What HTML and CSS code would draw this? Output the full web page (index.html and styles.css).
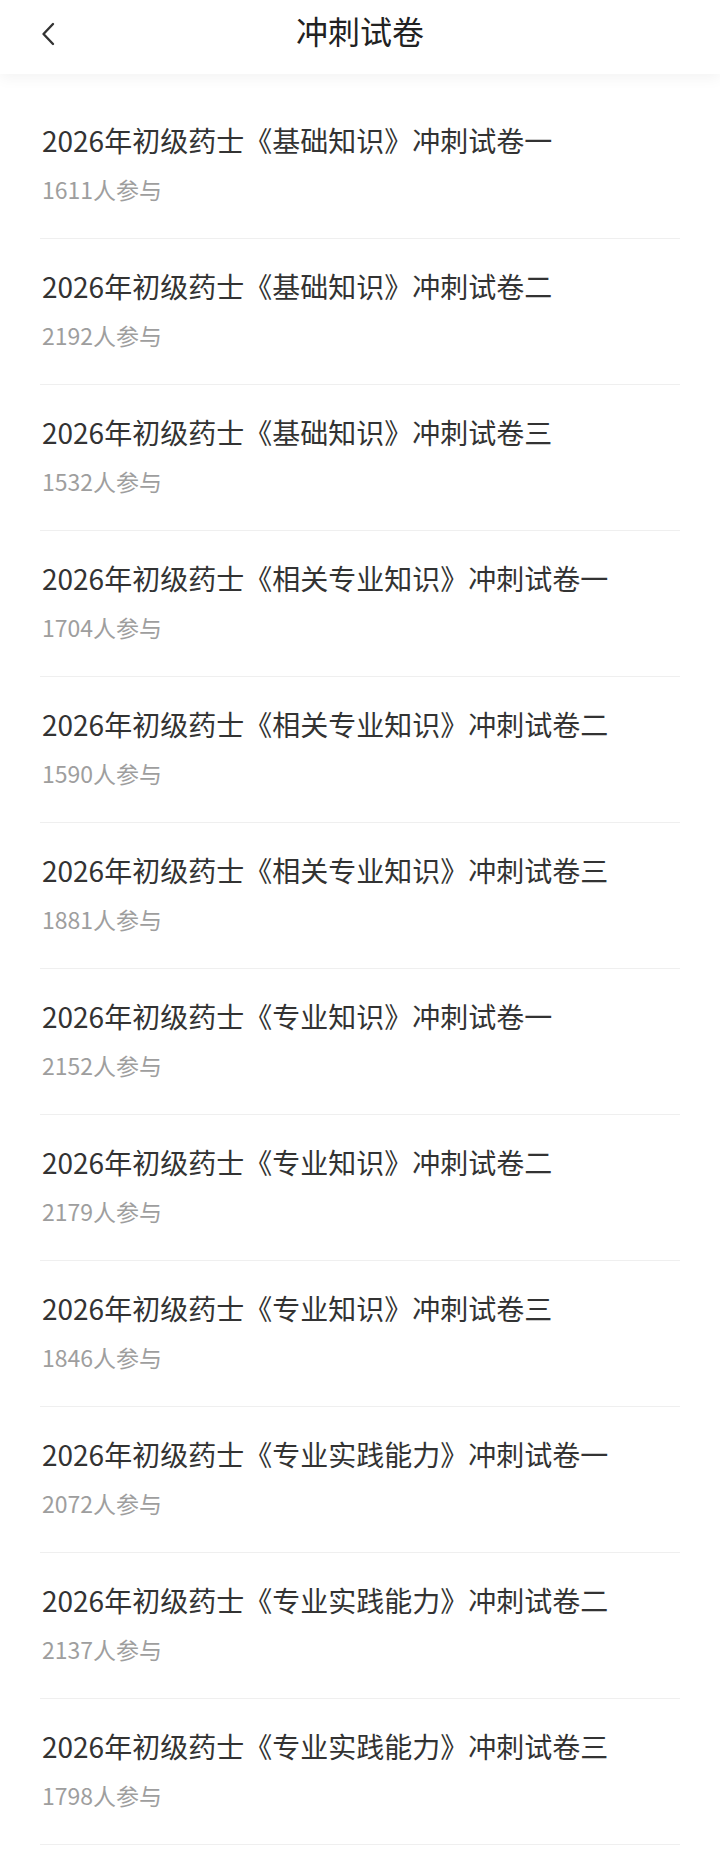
FILE: index.html
```html
<!DOCTYPE html>
<html lang="zh-CN">
<head>
  <meta charset="UTF-8">
  <meta name="viewport" content="width=device-width, initial-scale=1.0">
  <title>冲刺试卷</title>
  <link rel="stylesheet" href="styles.css">
</head>
<body>
  <header class="topbar">
    <a class="back" href="#" aria-label="返回">
      <svg width="14" height="24" viewBox="0 0 14 24" fill="none">
        <path d="M12 2 L2.5 12 L12 22" stroke="#333" stroke-width="2.4" stroke-linecap="round" stroke-linejoin="round"/>
      </svg>
    </a>
    <h1>冲刺试卷</h1>
  </header>

  <ul class="paper-list">
    <li class="paper"><p class="paper-title">2026年初级药士《基础知识》冲刺试卷一</p><p class="paper-count">1611人参与</p></li>
    <li class="paper"><p class="paper-title">2026年初级药士《基础知识》冲刺试卷二</p><p class="paper-count">2192人参与</p></li>
    <li class="paper"><p class="paper-title">2026年初级药士《基础知识》冲刺试卷三</p><p class="paper-count">1532人参与</p></li>
    <li class="paper"><p class="paper-title">2026年初级药士《相关专业知识》冲刺试卷一</p><p class="paper-count">1704人参与</p></li>
    <li class="paper"><p class="paper-title">2026年初级药士《相关专业知识》冲刺试卷二</p><p class="paper-count">1590人参与</p></li>
    <li class="paper"><p class="paper-title">2026年初级药士《相关专业知识》冲刺试卷三</p><p class="paper-count">1881人参与</p></li>
    <li class="paper"><p class="paper-title">2026年初级药士《专业知识》冲刺试卷一</p><p class="paper-count">2152人参与</p></li>
    <li class="paper"><p class="paper-title">2026年初级药士《专业知识》冲刺试卷二</p><p class="paper-count">2179人参与</p></li>
    <li class="paper"><p class="paper-title">2026年初级药士《专业知识》冲刺试卷三</p><p class="paper-count">1846人参与</p></li>
    <li class="paper"><p class="paper-title">2026年初级药士《专业实践能力》冲刺试卷一</p><p class="paper-count">2072人参与</p></li>
    <li class="paper"><p class="paper-title">2026年初级药士《专业实践能力》冲刺试卷二</p><p class="paper-count">2137人参与</p></li>
    <li class="paper"><p class="paper-title">2026年初级药士《专业实践能力》冲刺试卷三</p><p class="paper-count">1798人参与</p></li>
  </ul>
</body>
</html>
```

FILE: styles.css
```css
body {
  margin: 0;
  background: #fff;
  font-family: "Noto Sans CJK SC", "Noto Sans", sans-serif;
  color: #333;
}

.topbar {
  position: relative;
  box-sizing: border-box;
  height: 74px;
  padding-top: 10px;
  display: flex;
  align-items: flex-start;
  justify-content: center;
  background: #fff;
  box-shadow: 0 4px 14px rgba(0, 0, 0, 0.05);
}

.back {
  position: absolute;
  left: 41px;
  top: 22px;
  display: flex;
}

.topbar h1 {
  margin: 0;
  font-size: 32px;
  font-weight: 400;
  color: #222;
  line-height: 40px;
}

.paper-list {
  list-style: none;
  margin: 0;
  padding: 19px 40px 0;
}

.paper {
  padding: 29px 0 34px;
  border-bottom: 1px solid #efefef;
}

.paper p {
  margin: 0;
  padding-left: 2px;
}

.paper-title {
  font-size: 28px;
  line-height: 36px;
  color: #333;
}

.paper-count {
  margin-top: 16px !important;
  font-size: 23px;
  line-height: 30px;
  color: #9e9e9e;
}
```
